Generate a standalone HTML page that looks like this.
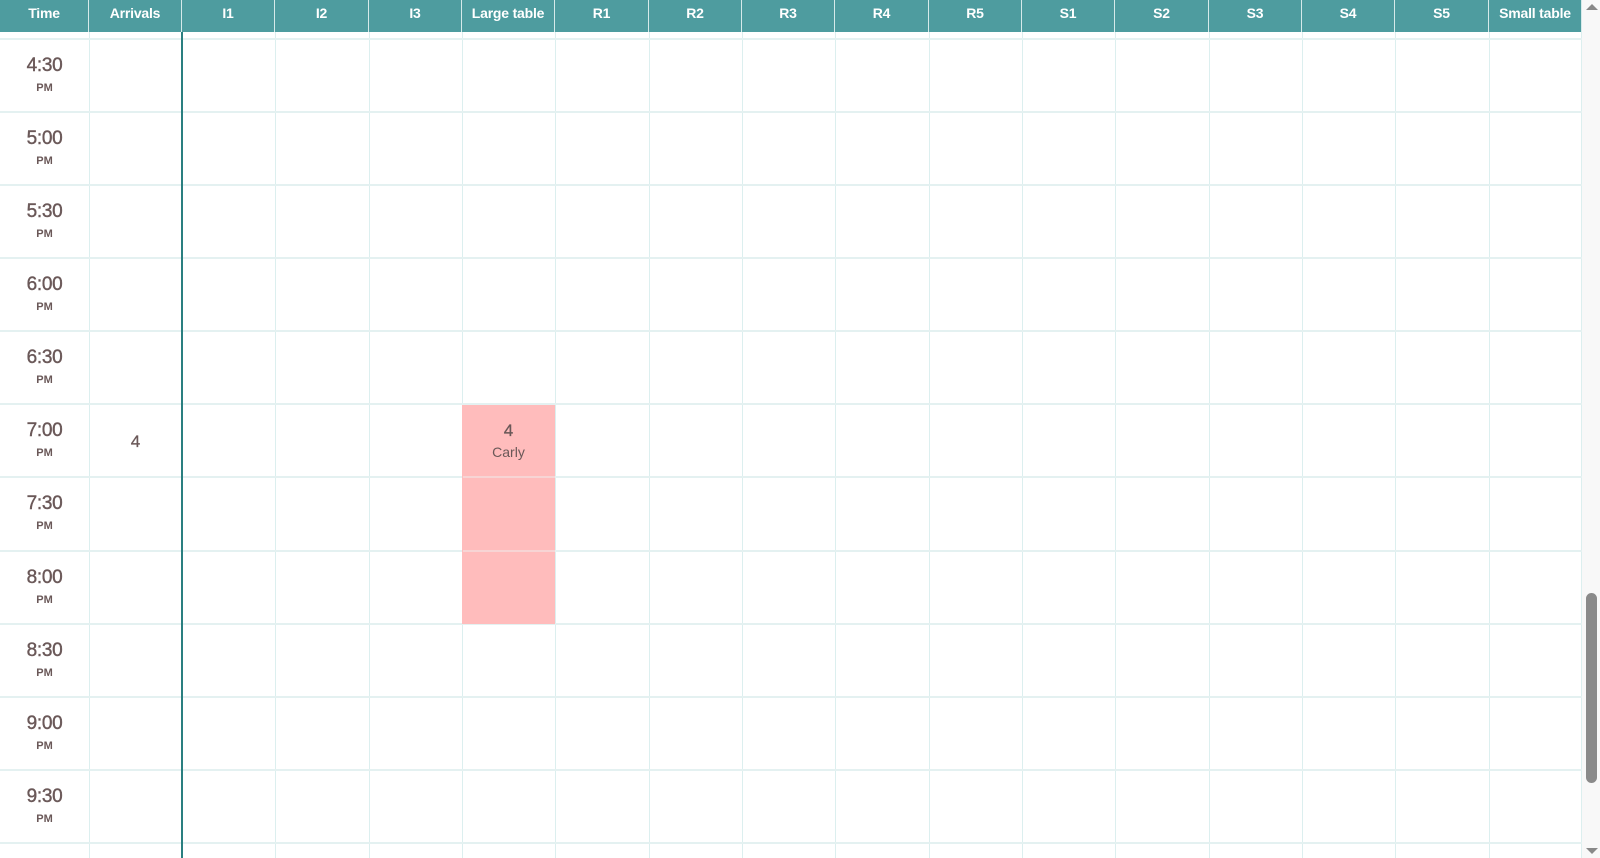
<!DOCTYPE html>
<html><head><meta charset="utf-8"><style>
*{margin:0;padding:0;box-sizing:border-box}
body{width:1600px;height:858px;overflow:hidden;background:#fff;font-family:"Liberation Sans",sans-serif;position:relative}
.h{position:absolute;top:0;height:32px;background:#4e9c9f;color:#fff;font-weight:bold;font-size:14px;text-align:center;line-height:27px;border-right:1px solid #d6eaea;letter-spacing:-0.2px}
.v{position:absolute;top:32px;bottom:0;width:1px;background:#dcefef}
.r{position:absolute;left:0;width:1582px;height:2px;background:#e4f1f1}
.t{position:absolute;left:0;width:89px;text-align:center;color:#6a5858}
.t b{display:block;font-size:19px;font-weight:normal;letter-spacing:-0.3px;-webkit-text-stroke:0.4px #6a5858}
.t i{display:block;font-style:normal;font-size:11px;font-weight:bold;margin-top:5px}
</style></head><body>
<div id="hd"></div>
<div style="position:absolute;left:181px;top:32px;bottom:0;width:2px;background:#2a7f80"></div>
<div style="position:absolute;left:462px;top:405px;width:93px;height:219px;background:#ffbcbc"></div>
<div style="position:absolute;left:462px;top:421px;width:93px;text-align:center;color:#6a5858;font-size:17px;-webkit-text-stroke:0.3px #6a5858">4</div>
<div style="position:absolute;left:462px;top:444px;width:93px;text-align:center;color:#6a5858;font-size:14px">Carly</div>
<div style="position:absolute;left:89px;top:432px;width:93px;text-align:center;color:#6a5858;font-size:17px;-webkit-text-stroke:0.3px #6a5858">4</div>
<div style="position:absolute;left:1582px;top:0;width:18px;height:858px;background:#f8f8f8"></div>
<div style="position:absolute;left:1586px;top:593px;width:11px;height:190px;background:#8a8a8a;border-radius:6px"></div>
<div style="position:absolute;left:1586px;top:4px;width:0;height:0;border-left:6px solid transparent;border-right:6px solid transparent;border-bottom:6px solid #888"></div>
<div style="position:absolute;left:1586px;top:848px;width:0;height:0;border-left:6px solid transparent;border-right:6px solid transparent;border-top:6px solid #888"></div>
<script>
var heads=["Time","Arrivals","I1","I2","I3","Large table","R1","R2","R3","R4","R5","S1","S2","S3","S4","S5","Small table"];
var xs=[0,89,182];for(var i=1;i<=15;i++)xs.push(Math.round(182+i*93.33));
var h="";
for(var i=0;i<17;i++){h+='<div class="h" style="left:'+xs[i]+'px;width:'+(xs[i+1]-xs[i])+'px">'+heads[i]+'</div>';
 if(i>0&&i!=2)h+='<div class="v" style="left:'+xs[i]+'px"></div>';}
h+='<div class="v" style="left:1581px"></div>';
var ys=[39,112,185,258,331,404,477,551,624,697,770,843];
var times=["4:30","5:00","5:30","6:00","6:30","7:00","7:30","8:00","8:30","9:00","9:30"];
for(var j=0;j<ys.length;j++){h+='<div class="r" style="top:'+(ys[j]-1)+'px"></div>';}
for(var j=0;j<11;j++)h+='<div class="t" style="top:'+(ys[j]+16)+'px"><b>'+times[j]+'</b><i>PM</i></div>';
document.getElementById("hd").innerHTML=h;
</script>
<div style="position:absolute;left:463px;top:476px;width:92px;height:2px;background:#f7d4d4"></div>
<div style="position:absolute;left:463px;top:550px;width:92px;height:2px;background:#f7d4d4"></div>
</body></html>
